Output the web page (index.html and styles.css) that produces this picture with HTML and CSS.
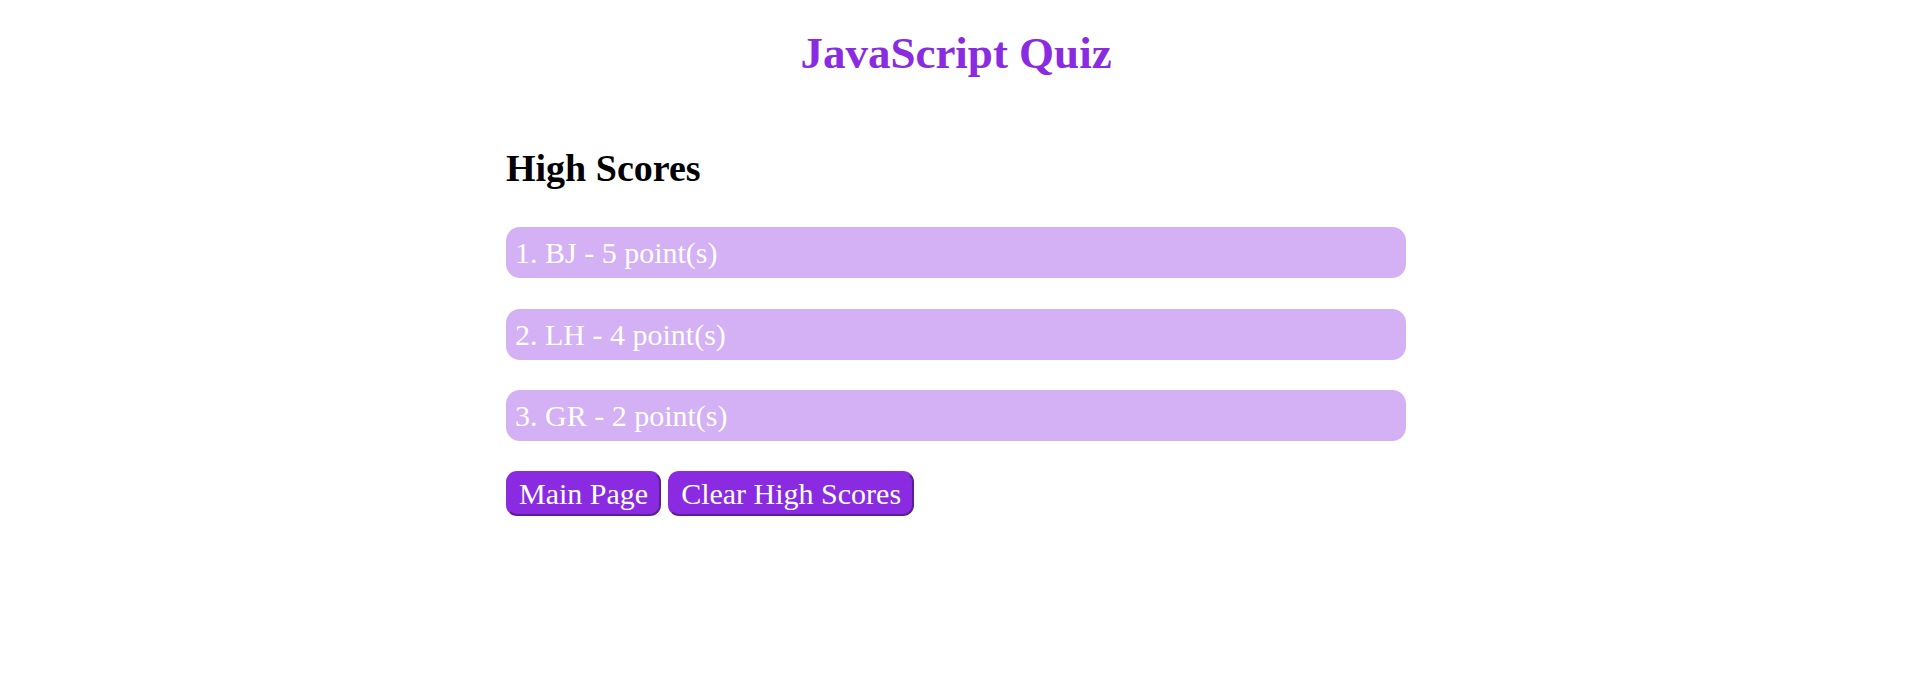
FILE: index.html
```html
<!DOCTYPE html>
<html lang="en">
<head>
<meta charset="utf-8">
<title>JavaScript Quiz</title>
<link rel="stylesheet" href="styles.css">
</head>
<body>
  <header class="site-header">
    <h1 class="site-title">JavaScript Quiz</h1>
  </header>
  <main class="scores">
    <h2 class="scores-title">High Scores</h2>
    <ol class="score-list">
      <li class="score-item">1. BJ - 5 point(s)</li>
      <li class="score-item">2. LH - 4 point(s)</li>
      <li class="score-item">3. GR - 2 point(s)</li>
    </ol>
    <div class="actions">
      <button class="btn" type="button">Main Page</button>
      <button class="btn" type="button">Clear High Scores</button>
    </div>
  </main>
</body>
</html>
```

FILE: styles.css
```css
html, body {
  margin: 0;
  padding: 0;
  background: #ffffff;
}

body {
  font-family: "Liberation Serif", "Times New Roman", serif;
  color: #000000;
}

.site-header {
  padding-top: 27px;
  padding-right: 3px;
  text-align: center;
}

.site-title {
  margin: 0;
  font-size: 45px;
  line-height: 52px;
  font-weight: bold;
  color: #8a2be2;
}

.scores {
  box-sizing: border-box;
  width: 903px;
  margin: 0 auto;
  padding: 67px 3px 0 0;
}

.scores-title {
  margin: 0;
  font-size: 38px;
  line-height: 44px;
  font-weight: bold;
}

.score-list {
  list-style: none;
  margin: 37px 0 0;
  padding: 0;
  display: flex;
  flex-direction: column;
  gap: 30.5px;
}

.score-item {
  height: 51px;
  line-height: 51px;
  padding-left: 9px;
  font-size: 30px;
  color: #ffffff;
  background: #d4b0f4;
  border-radius: 14px;
}

.actions {
  display: flex;
  gap: 7px;
  margin-top: 29.5px;
}

.btn {
  font-family: "Liberation Serif", "Times New Roman", serif;
  font-size: 30px;
  line-height: 37px;
  padding: 2px 11px;
  color: #ffffff;
  background: #8a2be2;
  border: 2px solid #8a2be2;
  border-right-color: #5c1d98;
  border-bottom-color: #5c1d98;
  border-radius: 11px;
  cursor: pointer;
}
```
